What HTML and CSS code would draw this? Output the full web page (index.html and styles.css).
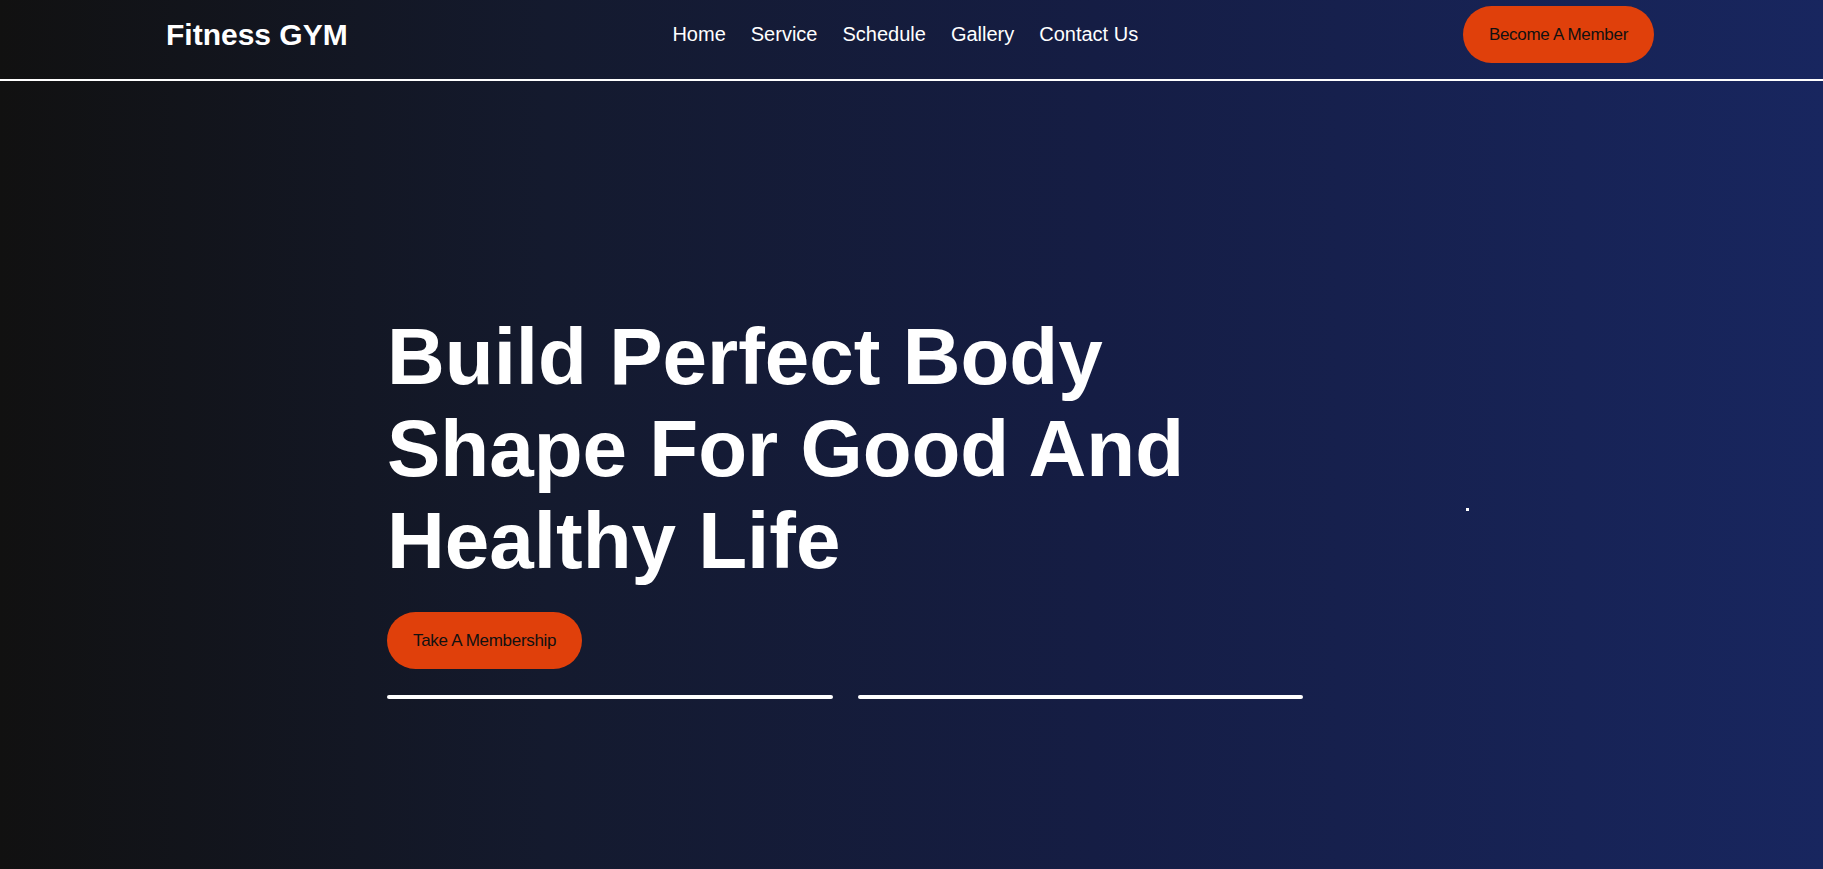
FILE: index.html
```html
<!DOCTYPE html>
<html lang="en">
<head>
<meta charset="utf-8">
<title>Fitness GYM</title>
<link rel="stylesheet" href="styles.css">
</head>
<body>
<header class="site-header">
  <div class="logo">Fitness GYM</div>
  <nav class="nav">
    <a href="#" class="nav-link">Home</a>
    <a href="#" class="nav-link">Service</a>
    <a href="#" class="nav-link">Schedule</a>
    <a href="#" class="nav-link">Gallery</a>
    <a href="#" class="nav-link">Contact Us</a>
  </nav>
  <button class="btn">Become A Member</button>
</header>
<main class="hero">
  <div class="hero-content">
    <h1 class="hero-title">Build Perfect Body Shape For Good And Healthy Life</h1>
    <div class="hero-actions">
      <button class="btn">Take A Membership</button>
    </div>
    <div class="hero-bars">
      <span class="bar"></span>
      <span class="bar"></span>
    </div>
  </div>
  <span class="hero-dot"></span>
</main>
</body>
</html>
```

FILE: styles.css
```css
* {
  box-sizing: border-box;
}

html, body {
  margin: 0;
  padding: 0;
}

body {
  min-height: 100vh;
  font-family: "Liberation Sans", Arial, sans-serif;
  color: #ffffff;
  background: linear-gradient(90deg, #111111 0%, #141a2e 30%, #151d44 60%, #18265f 100%);
  overflow: hidden;
}

.site-header {
  display: flex;
  justify-content: space-between;
  align-items: center;
  padding: 6px 169px 16px 166px;
  border-bottom: 2px solid #ffffff;
}

.logo {
  font-size: 30px;
  font-weight: bold;
  color: #ffffff;
}

.nav {
  display: flex;
  gap: 25px;
}

.nav-link {
  font-size: 20px;
  color: #ffffff;
  text-decoration: none;
}

.btn {
  display: inline-flex;
  align-items: center;
  justify-content: center;
  height: 57px;
  padding: 0 26px;
  border: none;
  border-radius: 30px;
  background: #e0400b;
  color: #111111;
  font-family: "Liberation Sans", Arial, sans-serif;
  font-size: 17px;
  letter-spacing: -0.3px;
  cursor: pointer;
}

.hero {
  display: flex;
  align-items: flex-start;
  padding: 230px 0 0 387px;
}

.hero-content {
  width: 916px;
  display: flex;
  flex-direction: column;
  gap: 25px;
}

.hero-title {
  margin: 0;
  font-size: 80px;
  font-weight: bold;
  line-height: normal;
  color: #ffffff;
}

.hero-actions {
  display: flex;
}

.hero-bars {
  display: flex;
  gap: 25px;
  margin-top: 1px;
}

.bar {
  flex: 1;
  height: 4px;
  border-radius: 2px;
  background: #ffffff;
}

.hero-dot {
  width: 3px;
  height: 3px;
  margin: 197px 0 0 163px;
  background: #ffffff;
}
```
